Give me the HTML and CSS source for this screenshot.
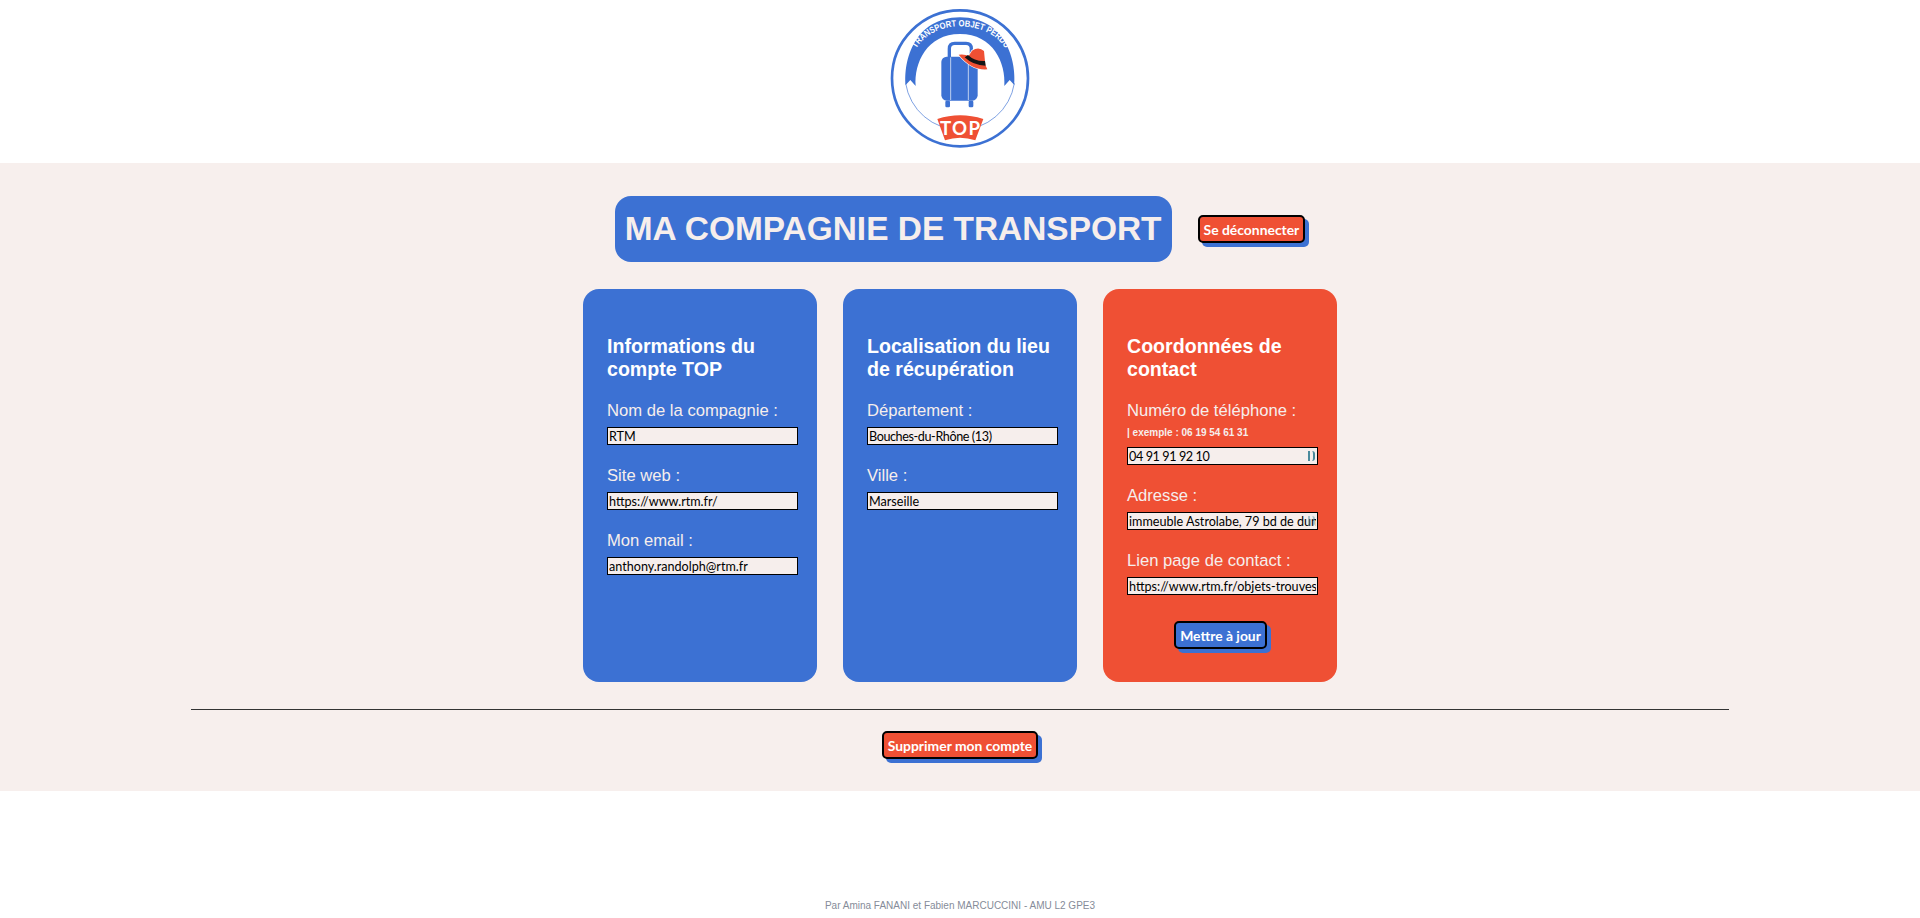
FILE: index.html
```html
<!DOCTYPE html>
<html lang="fr">
<head>
<meta charset="utf-8">
<title>Ma compagnie de transport</title>
<link rel="stylesheet" href="styles.css">
</head>
<body>
<header class="top">
  <svg class="logo" viewBox="90 24 420 420" aria-label="Logo TOP">
    <circle cx="300" cy="235" r="204" fill="#fff" stroke="#3c71d3" stroke-width="8"/>
    <path d="M137 250A165 165 0 0 0 463 250" fill="none" stroke="#3c71d3" stroke-width="2"/>
    <path d="M137 255C131 185 160 54 300 52C440 54 469 185 463 255L449 240L433 258C438 190 400 102 300 102C200 102 162 190 167 258L151 240Z" fill="#3c71d3"/>
    <path id="arc" d="M162 160C205 52 395 52 444 160" fill="none"/>
    <text class="logo-arc"><textPath href="#arc" startOffset="50%" text-anchor="middle" textLength="312" lengthAdjust="spacingAndGlyphs">TRANSPORT OBJET PERDU</textPath></text>
    <path d="M268 172V146Q268 130 284 130H318Q334 130 334 146V165" fill="none" stroke="#3c71d3" stroke-width="10"/>
    <rect x="244" y="170" width="109" height="132" rx="16" fill="#3c71d3"/>
    <path d="M272 172V300M325 172V300" stroke="#fff" stroke-width="2"/>
    <rect x="256" y="302" width="14" height="20" rx="4" fill="#3c71d3"/>
    <rect x="326" y="302" width="14" height="20" rx="4" fill="#3c71d3"/>
    <path d="M296 164Q316 162 326 168L336 152Q356 138 372 153L376 195L382 208Q335 212 296 164Z" fill="#fff" stroke="#fff" stroke-width="4"/>
    <path d="M296 164Q316 162 326 168L336 152Q356 138 372 153L376 195L382 208Q335 212 296 164Z" fill="#ef5034"/>
    <path d="M314 172L324 165Q345 185 375 183L377 197Q340 197 314 172Z" fill="#151515"/>
    <path d="M232 357Q300 335 370 357L346 421Q300 405 255 421Z" fill="#ef5034"/>
    <text class="logo-top" x="302" y="404" text-anchor="middle">TOP</text>
  </svg>
</header>

<main class="account">
  <div class="head">
    <h1 class="title">MA COMPAGNIE DE TRANSPORT</h1>
    <button class="btn btn-red" type="button">Se déconnecter</button>
  </div>

  <div class="cards">
    <section class="card card-blue">
      <h2>Informations du compte TOP</h2>
      <div class="field"><label>Nom de la compagnie :</label><input class="inp" value="RTM"></div>
      <div class="field"><label>Site web :</label><input class="inp" value="https://www.rtm.fr/"></div>
      <div class="field"><label>Mon email :</label><input class="inp" value="anthony.randolph@rtm.fr"></div>
    </section>

    <section class="card card-blue">
      <h2>Localisation du lieu de récupération</h2>
      <div class="field"><label>Département :</label><input class="inp inp-tight" value="Bouches-du-Rhône (13)"></div>
      <div class="field"><label>Ville :</label><input class="inp" value="Marseille"></div>
    </section>

    <section class="card card-red">
      <h2>Coordonnées de contact</h2>
      <div class="field">
        <label>Numéro de téléphone :</label>
        <small class="hint">| exemple : 06 19 54 61 31</small>
        <div class="inp-wrap"><input class="inp inp-tight" value="04 91 91 92 10"><span class="ext"></span></div>
      </div>
      <div class="field">
        <label>Adresse :</label>
        <div class="inp-wrap"><input class="inp" value="immeuble Astrolabe, 79 bd de dunkerque"><span class="ext ext-over"></span></div>
      </div>
      <div class="field"><label>Lien page de contact :</label><input class="inp" value="https://www.rtm.fr/objets-trouves"></div>
      <div class="card-action"><button class="btn btn-blue" type="button">Mettre à jour</button></div>
    </section>
  </div>

  <hr class="rule">
  <div class="danger"><button class="btn btn-red" type="button">Supprimer mon compte</button></div>
</main>

<footer class="foot">Par Amina FANANI et Fabien MARCUCCINI - AMU L2 GPE3</footer>
</body>
</html>
```
FILE: styles.css
```css
* { box-sizing: border-box; }
html, body { margin: 0; height: 100%; }
body {
  font-family: "Liberation Sans", Arial, sans-serif;
  background: #fff;
  height: 918px;
  overflow: hidden;
  display: flex;
  flex-direction: column;
}
.top { height: 163px; display: flex; justify-content: center; padding-top: 8px; }
.logo { width: 140px; height: 140px; display: block; }
.logo-arc { font: 700 27px "Liberation Sans", sans-serif; fill: #fff; }
.logo-top { font: 700 56px "Lato", sans-serif; fill: #fff; letter-spacing: 4px; }

.account {
  background: #f7efed;
  height: 628px;
  padding-top: 33px;
  display: flex;
  flex-direction: column;
  align-items: center;
}
.head { display: flex; align-items: center; gap: 26px; height: 66px; }
.title {
  margin: 0;
  background: #3c71d3;
  color: #f6eeec;
  font-size: 33.45px;
  font-weight: 700;
  line-height: 66px;
  padding: 0 10px;
  border-radius: 16px;
  white-space: nowrap;
}
.btn {
  font: 700 13.9px "Lato", sans-serif;
  color: #fff;
  border: 2px solid #000;
  border-radius: 5px;
  padding: 0 4px;
  height: 28px;
  white-space: nowrap;
}
.btn-red { background: #ef5034; box-shadow: 4px 4px 0 #3c71d3; }
.btn-blue { background: #3c71d3; box-shadow: 4px 4px 0 #3c71d3; }

.cards { display: flex; gap: 26px; margin-top: 27px; }
.card {
  width: 234px;
  height: 393px;
  border-radius: 16px;
  padding: 46px 19px 0 24px;
  color: #f6eeec;
}
.card-blue { background: #3c71d3; }
.card-red { background: #ef5034; }
.card h2 {
  margin: 0 0 20px;
  color: #fff;
  font-size: 19.6px;
  line-height: 23px;
  font-weight: 700;
}
.field { margin-bottom: 21px; }
.field label { display: block; font-size: 16.64px; line-height: 20px; margin-bottom: 6px; }
.hint { display: block; font-size: 10px; font-weight: 700; line-height: 14px; margin: -1px 0 7px; }
.inp-wrap { position: relative; }
.inp {
  display: block;
  width: 191px;
  height: 18px;
  padding: 0 1px;
  background: #f6eeec;
  color: #000;
  border: 1px solid #000;
  border-radius: 0;
  font: 12.6px "Lato", sans-serif;
  outline: none;
}
.inp-tight { letter-spacing: -.4px; }
.ext {
  position: absolute;
  right: 3px;
  top: 4px;
  width: 7px;
  height: 10px;
  border-left: 2px solid #4a8a9c;
  border-right: 2px solid #4a8a9c;
  border-radius: 0 3px 3px 0;
}
.ext-over { opacity: .45; }
.card-action { display: flex; justify-content: center; margin-top: 26px; padding-right: 4px; }

.rule { width: 1538px; margin: 27px 0 0; border: 0; border-top: 1px solid #333; }
.danger { margin-top: 21px; }
.foot {
  margin-top: auto;
  padding-bottom: 6px;
  text-align: center;
  font-size: 10px;
  line-height: 12px;
  color: #868c99;
}
```
